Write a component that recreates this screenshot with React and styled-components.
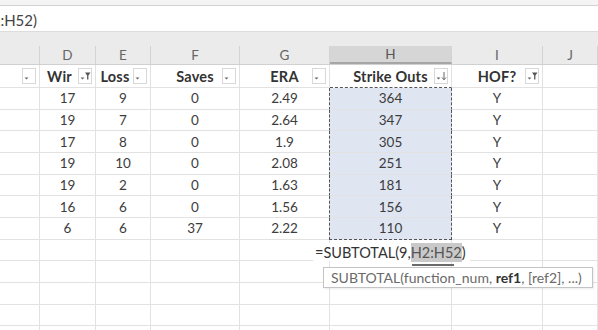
import React from "react";
import styled, { createGlobalStyle, css } from "styled-components";

const GlobalStyle = createGlobalStyle`
  html, body { margin: 0; padding: 0; background: #fff; }
  body { font-family: Lato, "Open Sans", sans-serif; overflow: hidden; }
`;

const COLS = "40px 56px 55px 89px 90px 122px 91px 1fr";

const Page = styled.div`
  position: relative;
  width: 598px;
  height: 330px;
  overflow: hidden;
  background: #fff;
`;

const TopStrip = styled.div`
  height: 5px;
  background: #f4f4f4;
  border-bottom: 1px solid #d2d2d2;
`;

const FormulaBar = styled.div`
  height: 26px;
  padding-top: 2px;
  display: flex;
  align-items: center;
  background: #fff;
  border-bottom: 1px solid #dcdcdc;
  box-sizing: border-box;
`;

const FormulaClip = styled.div`
  width: 37px;
  overflow: hidden;
  display: flex;
  justify-content: flex-end;
  white-space: nowrap;
  font-size: 15px;
  color: #444;
`;

const HeaderBand = styled.div`
  background: #ebebeb;
  padding-top: 14px;
  border-bottom: 1px solid #d0d0d0;
`;

const ColHeaderRow = styled.div`
  display: grid;
  grid-template-columns: ${COLS};
  height: 18px;
`;

const ColHeader = styled.div`
  display: flex;
  align-items: center;
  justify-content: center;
  font-size: 13.5px;
  color: #666;
  border-right: 1px solid #d3d3d3;
  box-sizing: border-box;
  ${(p) =>
    p.$active &&
    css`
      background: #d6d6d6;
      border-bottom: 2px solid #a6a6a6;
      color: #555;
    `}
`;

const HeadRow = styled.div`
  display: grid;
  grid-template-columns: ${COLS};
  height: 23px;
`;

const Grid = styled.div`
  display: grid;
  grid-template-columns: ${COLS};
  grid-auto-rows: 21.67px;
`;

const Cell = styled.div`
  position: relative;
  box-sizing: border-box;
  display: flex;
  align-items: center;
  justify-content: center;
  border-right: 1px solid #e2e2e2;
  border-bottom: 1px solid #e2e2e2;
  font-size: 13.5px;
  color: #3c3c3c;
  white-space: nowrap;
  overflow: hidden;
  ${(p) =>
    p.$head &&
    css`
      font-size: 14.5px;
      letter-spacing: 0.2px;
      font-weight: 700;
      color: #333;
    `}
  ${(p) =>
    p.$narrow &&
    css`
      padding-right: 16px;
    `}
  ${(p) =>
    p.$sel &&
    css`
      background: #dfe6f2;
      border-left: 1px dashed #555;
      border-right: 1px dashed #555;
      margin-left: -1px;
    `}
  ${(p) =>
    p.$selBottom &&
    css`
      border-bottom: 1px dashed #555;
    `}
  ${(p) =>
    p.$selHead &&
    css`
      border-bottom: 1px dashed #555;
    `}
`;

const FilterBtn = styled.div`
  position: absolute;
  right: 3px;
  top: 3px;
  width: 14px;
  height: 16px;
  box-sizing: border-box;
  border: 1px solid #d8d8d8;
  background: #fff;
  display: flex;
  align-items: center;
  justify-content: center;
`;

const EditBox = styled.div`
  position: absolute;
  left: 313px;
  top: 243px;
  height: 18px;
  padding-left: 2px;
  padding-right: 4px;
  background: #fff;
  display: flex;
  align-items: center;
  font-size: 14.5px;
  color: #333;
  white-space: nowrap;
`;

const RefHighlight = styled.span`
  position: relative;
  background: #c9c9c9;
  color: #555;
  padding: 1px 0;
  &::after {
    content: "";
    position: absolute;
    left: 1px;
    right: 8px;
    bottom: -4px;
    height: 2px;
    background: #6a6a6a;
  }
`;

const Tooltip = styled.div`
  position: absolute;
  left: 323px;
  top: 267px;
  width: 270px;
  height: 21px;
  box-sizing: border-box;
  border: 1px solid #c4c4c4;
  background: #fff;
  box-shadow: 1px 1px 2px rgba(0, 0, 0, 0.08);
  display: flex;
  align-items: center;
  padding-left: 7px;
  font-size: 14px;
  color: #6a6a6a;
  white-space: nowrap;
  b {
    color: #333;
    font-weight: 700;
  }
`;

function DropIcon({ kind }) {
  return (
    <svg width="12" height="10" viewBox="0 0 12 10">
      <path d="M1.5 6.5 L5.5 6.5 L3.5 8.5 Z" fill="#666" />
      {kind === "filter" && (
        <path d="M6 1.5 L11.5 1.5 L9.4 4.5 L9.4 8.5 L8.1 8.5 L8.1 4.5 Z" fill="#555" />
      )}
      {kind === "sort" && (
        <g stroke="#666" strokeWidth="1" fill="none">
          <path d="M9 1 L9 8.5" />
          <path d="M7 6.5 L9 8.8 L11 6.5" />
        </g>
      )}
    </svg>
  );
}

const letters = ["", "D", "E", "F", "G", "H", "I", "J"];

const headers = [
  { t: "", icon: "drop" },
  { t: "Wir", icon: "filter", narrow: true },
  { t: "Loss", icon: "drop", narrow: true },
  { t: "Saves", icon: "drop" },
  { t: "ERA", icon: "drop" },
  { t: "Strike Outs", icon: "sort" },
  { t: "HOF?", icon: "filter" },
  { t: null },
];

const data = [
  [17, 9, 0, "2.49", 364, "Y"],
  [19, 7, 0, "2.64", 347, "Y"],
  [17, 8, 0, "1.9", 305, "Y"],
  [19, 10, 0, "2.08", 251, "Y"],
  [19, 2, 0, "1.63", 181, "Y"],
  [16, 6, 0, "1.56", 156, "Y"],
  [6, 6, 37, "2.22", 110, "Y"],
];

export default function App() {
  const emptyRows = 5;
  return (
    <>
      <GlobalStyle />
      <Page>
        <TopStrip />
        <FormulaBar>
          <FormulaClip>=SUBTOTAL(9,H2:H52)</FormulaClip>
        </FormulaBar>
        <HeaderBand>
          <ColHeaderRow>
            {letters.map((l, i) => (
              <ColHeader key={i} $active={l === "H"}>
                {l}
              </ColHeader>
            ))}
          </ColHeaderRow>
        </HeaderBand>
        <HeadRow>
          {headers.map((h, i) => (
            <Cell key={i} $head $narrow={h.narrow} $selHead={i === 5}>
              {h.t}
              {h.t !== null && (
                <FilterBtn>
                  <DropIcon kind={h.icon} />
                </FilterBtn>
              )}
            </Cell>
          ))}
        </HeadRow>
        <Grid>
          {data.map((row, r) => (
            <React.Fragment key={r}>
              <Cell />
              {row.map((v, c) => (
                <Cell
                  key={c}
                  $sel={c === 4}
                  $selBottom={c === 4 && r === data.length - 1}
                >
                  {v}
                </Cell>
              ))}
              <Cell />
            </React.Fragment>
          ))}
          {Array.from({ length: emptyRows * 8 }).map((_, i) => (
            <Cell key={"e" + i} />
          ))}
        </Grid>
        <EditBox>
          =SUBTOTAL(9,<RefHighlight>H2:H52</RefHighlight>)
        </EditBox>
        <Tooltip>
          SUBTOTAL(function_num,&nbsp;<b>ref1</b>, [ref2], ...)
        </Tooltip>
      </Page>
    </>
  );
}
